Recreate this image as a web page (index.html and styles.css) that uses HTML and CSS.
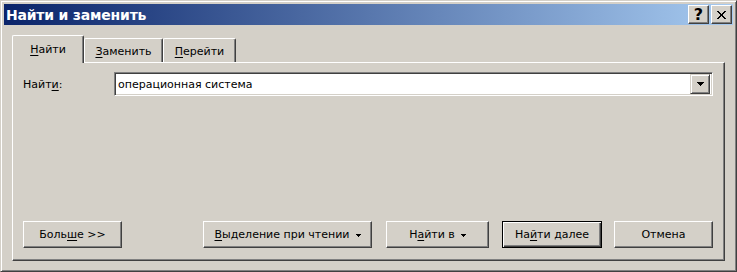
FILE: index.html
```html
<!DOCTYPE html>
<html lang="ru">
<head>
    <meta charset="UTF-8">
    <title>Найти и заменить</title>
    <link rel="stylesheet" href="styles.css">
</head>
<body>
    <div class="window">
        <div class="titlebar">
            <span class="title">Найти и заменить</span>
            <div class="caption-btns">
                <button class="cap-btn">?</button>
                <button class="cap-btn">
                    <svg width="9" height="8" viewBox="0 0 9 8">
                        <path d="M0 0h2v1h-2zM7 0h2v1h-2zM1 1h2v1h-2zM6 1h2v1h-2zM2 2h2v1h-2zM5 2h2v1h-2zM3 3h3v1h-3zM3 4h3v1h-3zM2 5h2v1h-2zM5 5h2v1h-2zM1 6h2v1h-2zM6 6h2v1h-2zM0 7h2v1h-2zM7 7h2v1h-2z" fill="#000"/>
                    </svg>
                </button>
            </div>
        </div>

        <div class="client">
            <div class="tabs">
                <div class="tab active tab-find"><span><u>Н</u>айти</span></div>
                <div class="tab tab-replace"><span><u>З</u>аменить</span></div>
                <div class="tab tab-goto"><span><u>П</u>ерейти</span></div>
            </div>

            <div class="panel">
                <div class="find-row">
                    <label class="find-label">Найт<u>и</u>:</label>
                    <div class="combo">
                        <span class="combo-text">операционная система</span>
                        <span class="combo-btn">
                            <svg width="7" height="4" viewBox="0 0 7 4">
                                <path d="M0 0h7v1h-7zM1 1h5v1h-5zM2 2h3v1h-3zM3 3h1v1h-1z" fill="#000"/>
                            </svg>
                        </span>
                    </div>
                </div>

                <div class="btn-row">
                    <button class="btn btn-more"><span>Боль<u>ш</u>е &gt;&gt;</span></button>
                    <button class="btn btn-reading"><span><u>В</u>ыделение при чтении</span>
                        <svg class="drop" width="5" height="3" viewBox="0 0 5 3"><path d="M0 0h5v1h-5zM1 1h3v1h-3zM2 2h1v1h-1z" fill="#000"/></svg>
                    </button>
                    <button class="btn btn-findin"><span>Н<u>а</u>йти в</span>
                        <svg class="drop" width="5" height="3" viewBox="0 0 5 3"><path d="M0 0h5v1h-5zM1 1h3v1h-3zM2 2h1v1h-1z" fill="#000"/></svg>
                    </button>
                    <button class="btn btn-next default"><span>На<u>й</u>ти далее</span></button>
                    <button class="btn btn-cancel"><span>Отмена</span></button>
                </div>
            </div>
        </div>
    </div>
</body>
</html>
```

FILE: styles.css
```css
html, body {
    margin: 0;
    padding: 0;
}
body {
    font-family: "DejaVu Sans", Tahoma, sans-serif;
    font-size: 11px;
    color: #000;
    background: #d4d0c8;
}
u {
    text-decoration: underline;
    text-underline-offset: 2px;
}

/* окно */
.window {
    width: 737px;
    height: 272px;
    box-sizing: border-box;
    display: flex;
    flex-direction: column;
    padding: 3px;
    background: #d4d0c8;
    border: 1px solid;
    border-color: #d4d0c8 #404040 #404040 #d4d0c8;
    box-shadow: inset 1px 1px #fff, inset -1px -1px #808080;
}
.titlebar {
    height: 21px;
    flex: none;
    display: flex;
    align-items: center;
    justify-content: space-between;
    padding-left: 2px;
    background: linear-gradient(to right, #0a246a, #a6caf0);
}
.title {
    color: #fff;
    font-weight: bold;
    font-size: 14px;
    letter-spacing: -0.2px;
}
.caption-btns {
    display: flex;
    gap: 2px;
    margin-right: 1px;
}
.cap-btn {
    width: 21px;
    height: 19px;
    box-sizing: border-box;
    padding: 0;
    display: flex;
    align-items: center;
    justify-content: center;
    background: #d4d0c8;
    border: 1px solid;
    border-color: #fff #404040 #404040 #fff;
    box-shadow: inset -1px -1px #808080;
    font-family: "DejaVu Sans", sans-serif;
    font-weight: bold;
    font-size: 16px;
    line-height: 1;
    color: #000;
}

/* вкладки */
.client {
    flex: 1;
    display: flex;
    flex-direction: column;
    padding: 10px 8px 7px 8px;
}
.tabs {
    display: flex;
    align-items: flex-end;
    height: 27px;
    flex: none;
}
.tab {
    box-sizing: border-box;
    height: 24px;
    display: flex;
    align-items: center;
    justify-content: center;
    padding-top: 1px;
    border: 1px solid;
    border-bottom: none;
    border-color: #fff #404040 #fff #fff;
    border-radius: 2px 2px 0 0;
    box-shadow: inset -1px 0 #808080;
    background: #d4d0c8;
}
.tab.active {
    height: 28px;
    margin-bottom: -1px;
    position: relative;
    z-index: 1;
    padding-top: 0;
    padding-bottom: 1px;
}
.tab-find { width: 72px; }
.tab-replace { width: 79px; }
.tab-goto { width: 73px; }

.panel {
    flex: 1;
    display: flex;
    flex-direction: column;
    padding: 9px 11px 12px 10px;
    border: 1px solid;
    border-color: #fff #404040 #404040 #fff;
    box-shadow: inset -1px -1px #808080;
}

/* строка поиска */
.find-row {
    display: flex;
    align-items: center;
}
.find-label {
    width: 91px;
    flex: none;
}
.combo {
    flex: 1;
    height: 24px;
    box-sizing: border-box;
    display: flex;
    align-items: center;
    background: #fff;
    border: 1px solid;
    border-color: #808080 #fff #fff #808080;
    box-shadow: inset 1px 1px #404040, inset -1px -1px #d4d0c8;
    padding: 2px 2px 2px 3px;
}
.combo-text {
    flex: 1;
}
.combo-btn {
    width: 20px;
    height: 20px;
    box-sizing: border-box;
    display: flex;
    align-items: center;
    justify-content: center;
    background: #d4d0c8;
    border: 1px solid;
    border-color: #d4d0c8 #404040 #404040 #d4d0c8;
    box-shadow: inset 1px 1px #fff, inset -1px -1px #808080;
}

/* кнопки */
.btn-row {
    margin-top: auto;
    display: flex;
    align-items: center;
}
.btn {
    height: 27px;
    box-sizing: border-box;
    display: flex;
    align-items: center;
    justify-content: center;
    padding: 0;
    background: #d4d0c8;
    border: 1px solid;
    border-color: #fff #404040 #404040 #fff;
    box-shadow: inset -1px -1px #808080;
    font-family: inherit;
    font-size: 11px;
    color: #000;
}
.btn.default {
    border: 1px solid #000;
    box-shadow: inset 1px 1px #fff, inset -1px -1px #404040, inset -2px -2px #808080;
}
.btn .drop {
    margin-left: 6px;
    margin-top: 1px;
}
.btn-more { width: 99px; margin-right: 81px; }
.btn-reading { width: 169px; margin-right: 14px; }
.btn-findin { width: 103px; margin-right: 13px; }
.btn-next { width: 100px; margin-right: 12px; }
.btn-cancel { width: 99px; }
```
